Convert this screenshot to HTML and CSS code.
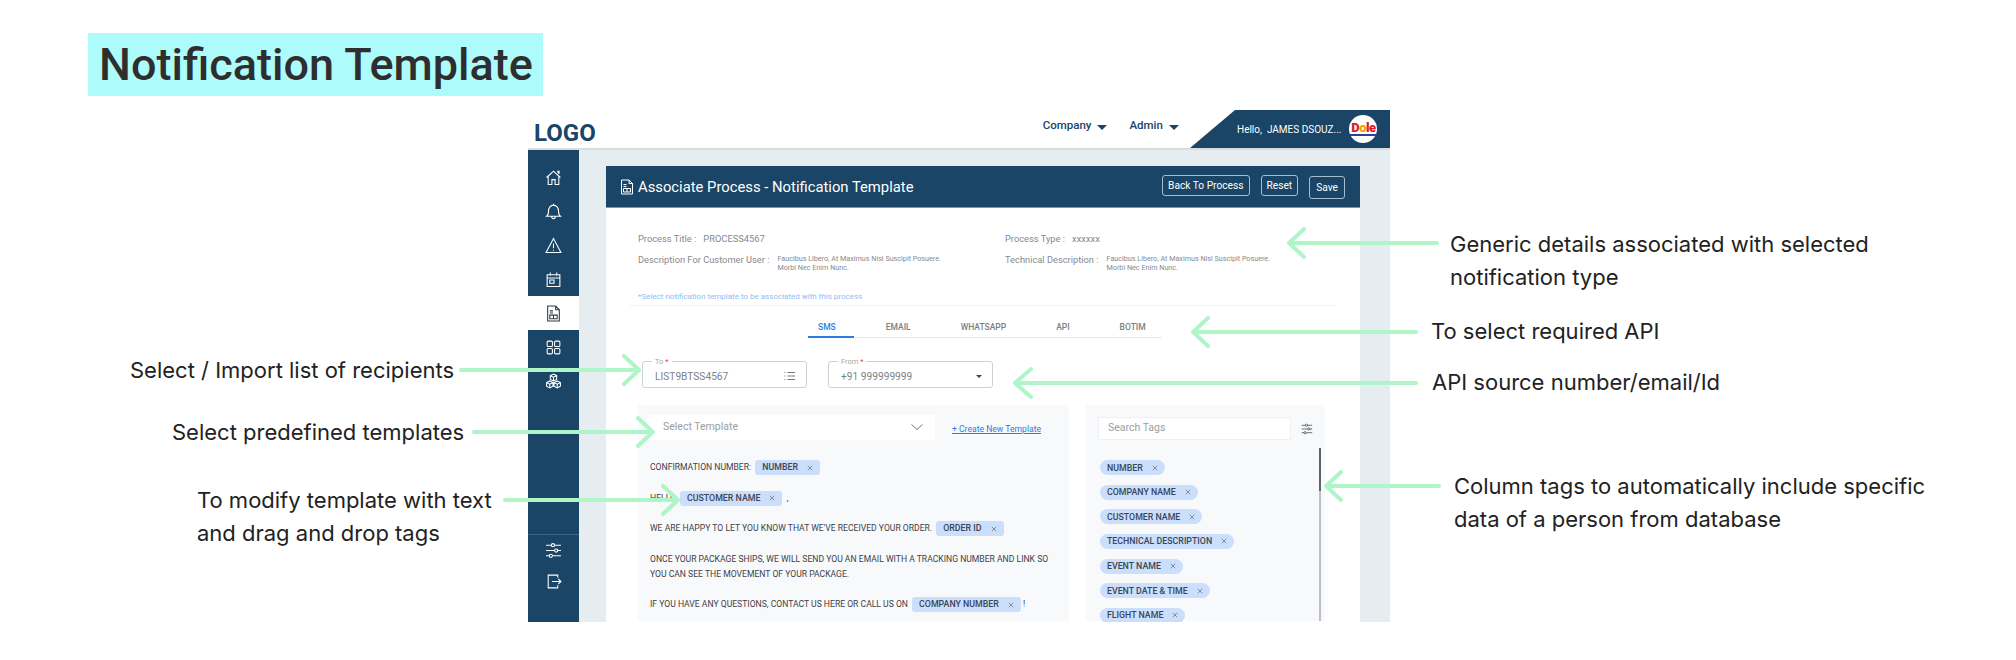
FILE: index.html
```html
<!DOCTYPE html>
<html lang="en">
<head>
    <meta charset="UTF-8">
    <meta name="viewport" content="width=device-width, initial-scale=1.0">
    <title>Notification Template</title>
    <link rel="stylesheet" href="styles.css">
</head>
<body>

    <svg class="sprite" width="0" height="0">
        <symbol id="i-x" viewBox="0 0 8 8"><path d="M1 1l6 6M7 1L1 7"/></symbol>
        <symbol id="i-home" viewBox="0 0 16 16"><path d="M1.500 8L8 2l6.500 6M3 7v7.500h3.500v-4.500h3v4.500H13V7"/><path d="M11.500 2.500h1.500v2" stroke-width="1.500"/></symbol>
        <symbol id="i-bell" viewBox="0 0 16 16"><path d="M1.500 12.500c1.300-.8 1.800-2.300 1.800-5C3.300 4.500 5.300 2 8 2s4.700 2.500 4.700 5.500c0 2.700.5 4.200 1.800 5zM8 .8V2M6.300 12.800c0 2.600 3.400 2.600 3.400 0"/></symbol>
        <symbol id="i-warn" viewBox="0 0 16 16"><path d="M8 1.500L1 14.500h14zM8 6v4.500M8 12v1"/></symbol>
        <symbol id="i-cal" viewBox="0 0 16 16"><path d="M2 3.500h12v11H2zM2 6.500h12M5 1.500v3M11 1.500v3M4.500 8.500h4v3h-4z"/></symbol>
        <symbol id="i-doc" viewBox="0 0 14 16"><path d="M1.500 1h7.500l3.500 3.500V15h-11zM9 1v3.500h3.500M3.500 9.500h7v3.500h-7zM7 9.500V13M3.500 5.500h3M3.500 7.500h3"/></symbol>
        <symbol id="i-grid" viewBox="0 0 16 16"><rect x="2" y="2" width="5" height="5" rx="1"/><rect x="9" y="2" width="5" height="5" rx="1"/><rect x="2" y="9" width="5" height="5" rx="1"/><rect x="9" y="9" width="5" height="5" rx="1"/></symbol>
        <symbol id="i-boxes" viewBox="0 0 16 16"><path d="M8 1l3 1.500v3.500l-3 1.500-3-1.500V2.500zM5 2.500L8 4l3-1.500M8 4v3.500M4.500 7.500l3 1.500v3.500l-3 1.500-3-1.500V9zM1.500 9l3 1.500 3-1.500M4.500 10.500V14M11.500 7.500l3 1.500v3.500l-3 1.500-3-1.500V9zM8.500 9l3 1.500 3-1.500M11.500 10.500V14"/></symbol>
        <symbol id="i-sliders" viewBox="0 0 16 16"><path d="M1 3h5M9 3h6M1 8h8M12 8h3M1 13h3M7 13h8"/><circle cx="7.500" cy="3" r="1.500"/><circle cx="10.500" cy="8" r="1.500"/><circle cx="5.500" cy="13" r="1.500"/></symbol>
        <symbol id="i-exit" viewBox="0 0 16 16"><path d="M12 4.500V2H3v12h9v-2.500M6.500 8H15M12.500 5.500L15 8l-2.500 2.500"/></symbol>
        <symbol id="i-list" viewBox="0 0 12 10"><path d="M3.500 1.500H11M3.500 5H11M3.500 8.500H11M.5 1.500h1M.5 5h1M.5 8.500h1"/></symbol>
    </svg>

    <h1 class="page-title">Notification Template</h1>

    <div class="mock">
        <header class="topbar">
            <div class="logo">LOGO</div>
            <div class="topnav">
                <span class="topnav-item">Company<i class="caret"></i></span>
                <span class="topnav-item">Admin<i class="caret"></i></span>
            </div>
            <div class="user">
                <span>Hello,&nbsp; JAMES DSOUZ...</span>
                <span class="avatar"><span class="dole">D<span class="sun">o</span>le</span></span>
            </div>
        </header>

        <div class="mock-body">
            <nav class="sidebar">
                <a class="side-item"><svg class="icon"><use href="#i-home"/></svg></a>
                <a class="side-item"><svg class="icon"><use href="#i-bell"/></svg></a>
                <a class="side-item"><svg class="icon"><use href="#i-warn"/></svg></a>
                <a class="side-item"><svg class="icon"><use href="#i-cal"/></svg></a>
                <a class="side-item active"><svg class="icon"><use href="#i-doc"/></svg></a>
                <a class="side-item"><svg class="icon"><use href="#i-grid"/></svg></a>
                <a class="side-item"><svg class="icon"><use href="#i-boxes"/></svg></a>
                <div class="side-bottom">
                    <a class="side-item"><svg class="icon"><use href="#i-sliders"/></svg></a>
                    <a class="side-item"><svg class="icon"><use href="#i-exit"/></svg></a>
                </div>
            </nav>

            <main class="content">
                <section class="card">
                    <div class="card-head">
                        <svg class="head-icon"><use href="#i-doc"/></svg>
                        <h2>Associate Process - Notification Template</h2>
                        <div class="head-actions">
                            <button>Back To Process</button>
                            <button>Reset</button>
                            <button class="save">Save</button>
                        </div>
                    </div>

                    <div class="details">
                        <div class="detail">Process Title :<span class="detail-val">PROCESS4567</span></div>
                        <div class="detail">Process Type :<span class="detail-val">xxxxxx</span></div>
                        <div class="detail">Description For Customer User :<span class="detail-small">Faucibus Libero, At Maximus Nisl Suscipit Posuere.<br>Morbi Nec Enim Nunc.</span></div>
                        <div class="detail">Technical Description :<span class="detail-small">Faucibus Libero, At Maximus Nisl Suscipit Posuere.<br>Morbi Nec Enim Nunc.</span></div>
                    </div>

                    <div class="note">*Select notification template to be associated with this process</div>

                    <div class="tabs">
                        <span class="tab active">SMS</span>
                        <span class="tab">EMAIL</span>
                        <span class="tab">WHATSAPP</span>
                        <span class="tab">API</span>
                        <span class="tab">BOTIM</span>
                    </div>

                    <div class="fields">
                        <div class="field">
                            <span class="field-label">To <b>*</b></span>
                            LIST9BTSS4567
                            <svg class="list-icon"><use href="#i-list"/></svg>
                        </div>
                        <div class="field">
                            <span class="field-label">From <b>*</b></span>
                            +91 999999999
                            <i class="caret small"></i>
                        </div>
                    </div>

                    <div class="panels">
                        <div class="template-panel">
                            <div class="template-top">
                                <div class="template-select">Select Template
                                    <svg class="chevron" viewBox="0 0 12 6"><path d="M.5.5L6 5.500 11.500.5"/></svg>
                                </div>
                                <a class="create-link">+ Create New Template</a>
                            </div>
                            <div class="editor">
                                <p>CONFIRMATION NUMBER: <span class="chip">NUMBER<svg class="x"><use href="#i-x"/></svg></span></p>
                                <p>HELLO <span class="chip">CUSTOMER NAME<svg class="x"><use href="#i-x"/></svg></span> &nbsp;,</p>
                                <p>WE ARE HAPPY TO LET YOU KNOW THAT WE'VE RECEIVED YOUR ORDER. <span class="chip">ORDER ID<svg class="x"><use href="#i-x"/></svg></span></p>
                                <p>ONCE YOUR PACKAGE SHIPS, WE WILL SEND YOU AN EMAIL WITH A TRACKING NUMBER AND LINK SO YOU CAN SEE THE MOVEMENT OF YOUR PACKAGE.</p>
                                <p>IF YOU HAVE ANY QUESTIONS, CONTACT US HERE OR CALL US ON <span class="chip">COMPANY NUMBER<svg class="x"><use href="#i-x"/></svg></span> !</p>
                            </div>
                        </div>

                        <div class="tags-panel">
                            <div class="tags-search">
                                <div class="search-box">Search Tags</div>
                                <svg class="filter-icon"><use href="#i-sliders"/></svg>
                            </div>
                            <div class="tags">
                                <span class="chip pill">NUMBER<svg class="x"><use href="#i-x"/></svg></span>
                                <span class="chip pill">COMPANY NAME<svg class="x"><use href="#i-x"/></svg></span>
                                <span class="chip pill">CUSTOMER NAME<svg class="x"><use href="#i-x"/></svg></span>
                                <span class="chip pill">TECHNICAL DESCRIPTION<svg class="x"><use href="#i-x"/></svg></span>
                                <span class="chip pill">EVENT NAME<svg class="x"><use href="#i-x"/></svg></span>
                                <span class="chip pill">EVENT DATE &amp; TIME<svg class="x"><use href="#i-x"/></svg></span>
                                <span class="chip pill">FLIGHT NAME<svg class="x"><use href="#i-x"/></svg></span>
                            </div>
                            <div class="scrollbar"><div class="scroll-thumb"></div></div>
                        </div>
                    </div>
                </section>
            </main>
        </div>
    </div>

    <!-- callouts sit on top of the mockup -->
    <svg class="arrows" viewBox="0 0 2016 660">
        <path d="M1437 243H1290M1304 229l-15 14 15 14"/>
        <path d="M1416 332H1194M1208 318l-15 14 15 14"/>
        <path d="M1416 383H1016M1031 369l-16 14 16 14"/>
        <path d="M1439 486H1327M1341 472l-15 14 15 14"/>
        <path d="M461 370H637M624 356l15 14-15 14"/>
        <path d="M474 432H650M638 418l15 14-15 14"/>
        <path d="M505 500H676M663 486l15 14-15 14"/>
    </svg>

    <p class="callout c-generic">Generic details associated with selected notification type</p>
    <p class="callout c-api">To select required API</p>
    <p class="callout c-source">API source number/email/Id</p>
    <p class="callout c-tags">Column tags to automatically include specific data of a person from database</p>
    <p class="callout c-import">Select / Import list of recipients</p>
    <p class="callout c-predefined">Select predefined templates</p>
    <p class="callout c-modify">To modify template with text and drag and drop tags</p>

</body>
</html>
```

FILE: styles.css
```css
* {
    box-sizing: border-box;
}

body {
    position: relative;
    width: 2016px;
    height: 660px;
    margin: 0;
    overflow: hidden;
    background-color: #fff;
    font-family: Roboto, sans-serif;
}

.sprite {
    position: absolute;
}

symbol {
    fill: none;
    stroke: currentColor;
}

.page-title {
    width: 455px;
    height: 63px;
    margin: 33px 0 0 88px;
    padding-left: 11px;
    background-color: #adfbfb;
    color: #2e2e2e;
    font-size: 45px;
    font-weight: 500;
    line-height: 63px;
    white-space: nowrap;
}

/* mockup */
.mock {
    width: 862px;
    height: 512px;
    margin: 14px 0 0 528px;
    overflow: hidden;
}

.topbar {
    display: flex;
    align-items: center;
    height: 40px;
    background-color: #fff;
    box-shadow: 0 -1px 0 #f4f4f4;
}

.logo {
    padding: 5px 0 0 6px;
    color: #1a4566;
    font-size: 24px;
    font-weight: 700;
}

.topnav {
    display: flex;
    gap: 22px;
    margin: 0 0 10px 447px;
    color: #1a4566;
    font-size: 11.500px;
    font-weight: 500;
}

.topnav-item {
    display: flex;
    align-items: center;
}

.caret {
    display: inline-block;
    width: 0;
    height: 0;
    margin: 5px 0 0 6px;
    border-top: 5px solid #1a4566;
    border-left: 5.500px solid transparent;
    border-right: 5.500px solid transparent;
}

.user {
    display: flex;
    align-items: center;
    width: 200px;
    height: 38px;
    margin: 0 0 2px auto;
    padding-left: 47px;
    gap: 8px;
    background-color: #1a4566;
    clip-path: polygon(45px 0, 100% 0, 100% 100%, 0 100%);
    color: #fff;
    font-size: 10px;
    white-space: nowrap;
}

.avatar {
    display: flex;
    align-items: center;
    justify-content: center;
    flex: none;
    width: 28px;
    height: 28px;
    border-radius: 50%;
    background-color: #fff;
}

.dole {
    padding: 0 1px 1px;
    border-bottom: 2px solid #2b3f9e;
    color: #e11b22;
    font-size: 13px;
    font-weight: 900;
    letter-spacing: -0.5px;
    line-height: 11px;
}

.sun {
    color: #f5a300;
}

.mock-body {
    display: flex;
    height: 474px;
    margin-top: -2px;
    border-top: 2px solid #d9dde0;
}

.sidebar {
    display: flex;
    flex-direction: column;
    flex: none;
    width: 51px;
    padding-top: 10px;
    background-color: #1a4566;
}

.side-item {
    display: flex;
    align-items: center;
    justify-content: center;
    height: 34px;
    color: #fff;
}

.side-item.active {
    background-color: #fff;
    color: #333a40;
}

.icon {
    width: 17px;
    height: 17px;
}

.side-bottom {
    margin-top: auto;
    padding-bottom: 25px;
    border-top: 1px solid #3f6583;
}

.side-bottom .side-item {
    height: 31px;
}

.content {
    flex: 1;
    padding: 16px 30px 0 27px;
    background-color: #e6edf1;
}

.card {
    height: 100%;
    background-color: #fff;
    overflow: hidden;
}

.card-head {
    display: flex;
    align-items: center;
    height: 42px;
    padding: 0 15px 0 14px;
    background-color: #1a4566;
    border-bottom: 1px solid #7d96aa;
    color: #fff;
}

.head-icon {
    flex: none;
    width: 14px;
    height: 16px;
    margin-right: 4px;
}

.card-head h2 {
    margin: 0;
    font-size: 14.800px;
    font-weight: 400;
}

.head-actions {
    display: flex;
    gap: 11px;
    margin-left: auto;
}

.head-actions button {
    height: 21px;
    padding: 0 5px;
    border: 1px solid #a9bccb;
    border-radius: 3px;
    background: none;
    color: #fff;
    font-family: Roboto, sans-serif;
    font-size: 10.200px;
}

.head-actions .save {
    height: 23px;
    margin-top: 1px;
    padding: 0 6px;
}

.details {
    display: grid;
    grid-template-columns: 367px 1fr;
    row-gap: 7px;
    padding: 24px 0 0 32px;
    color: #858a8f;
    font-size: 9.300px;
    line-height: 14px;
}

.detail {
    display: flex;
}

.detail-val {
    margin-left: 7px;
}

.detail-small {
    margin-left: 8px;
    padding-top: 2px;
    font-size: 7.200px;
    line-height: 8.500px;
}

.note {
    height: 16px;
    margin: 18px 24px 0;
    padding-left: 8px;
    border-bottom: 1px solid #eef3fa;
    color: #8fbcf5;
    font-size: 8px;
    line-height: 13px;
}

.tabs {
    display: flex;
    gap: 22px;
    width: 354px;
    height: 22px;
    margin: 10px 0 0 202px;
    border-bottom: 1px solid #e4e6e9;
    color: #7a7f85;
    font-size: 8.500px;
    font-weight: 500;
    line-height: 22px;
}

.tab {
    height: 22px;
    padding: 0 18px 0 10px;
}

.tab.active {
    color: #2e7be6;
    border-bottom: 2px solid #2e7be6;
}

.fields {
    display: flex;
    gap: 21px;
    margin: 23px 0 0 36px;
}

.field {
    position: relative;
    display: flex;
    align-items: center;
    justify-content: space-between;
    width: 165px;
    height: 27px;
    padding: 3px 10px 0 12px;
    border: 1px solid #ccd1d7;
    border-radius: 3px;
    color: #7d8287;
    font-size: 10.200px;
}

.field-label {
    position: absolute;
    top: -5px;
    left: 9px;
    padding: 0 3px;
    background-color: #fff;
    color: #a3a7ab;
    font-size: 7.500px;
    line-height: 9px;
}

.field-label b {
    color: #e23b3b;
    font-weight: 400;
}

.list-icon {
    width: 12px;
    height: 10px;
    color: #70757a;
}

.caret.small {
    margin: 0;
    border-top-width: 3px;
    border-top-color: #444;
    border-left-width: 3.500px;
    border-right-width: 3.500px;
}

.panels {
    display: flex;
    gap: 17px;
    height: 216px;
    margin: 17px 0 0 32px;
}

.template-panel {
    width: 431px;
    padding: 10px 0 0 9px;
    background-color: #f8f9fb;
}

.template-top {
    display: flex;
    align-items: center;
    gap: 17px;
}

.template-select {
    display: flex;
    align-items: center;
    justify-content: space-between;
    width: 288px;
    height: 25px;
    padding: 0 12px 2px 16px;
    background-color: #fff;
    color: #9a9ea3;
    font-size: 10.500px;
}

.chevron {
    width: 12px;
    height: 6px;
    fill: none;
    stroke: #70757a;
}

.create-link {
    margin-top: 3px;
    color: #2e7be6;
    font-size: 8.600px;
    text-decoration: underline;
}

.editor {
    padding: 20px 10px 0 3px;
    color: #3d4147;
    font-size: 8.600px;
    line-height: 15px;
}

.editor p {
    margin: 0 0 15.500px;
}

.chip {
    display: inline-flex;
    align-items: center;
    height: 15px;
    margin-left: 2px;
    padding: 0 7px;
    border-radius: 3px;
    background-color: #cbdefb;
    color: #3a4657;
    font-size: 8.800px;
    font-weight: 500;
    vertical-align: top;
}

.x {
    width: 6px;
    height: 6px;
    margin-left: 9px;
    color: #6a7280;
}

.tags-panel {
    position: relative;
    width: 239px;
    padding: 12px 12px 0;
    background-color: #f8f9fb;
}

.tags-search {
    display: flex;
    align-items: center;
    gap: 10px;
}

.search-box {
    width: 194px;
    height: 23px;
    padding: 0 9px;
    border: 1px solid #eef0f3;
    background-color: #fff;
    color: #9a9ea3;
    font-size: 10.500px;
    line-height: 20px;
}

.filter-icon {
    width: 12px;
    height: 12px;
    color: #3d4147;
}

.tags {
    display: flex;
    flex-direction: column;
    align-items: flex-start;
    gap: 9.670px;
    margin: 20px 0 0 2px;
}

.chip.pill {
    margin: 0;
    border-radius: 8px;
}

.scrollbar {
    position: absolute;
    top: 43px;
    right: 4px;
    bottom: 0;
    width: 2px;
    background-color: #bdbfc2;
}

.scroll-thumb {
    height: 43px;
    background-color: #5f6368;
}

/* callouts */
.arrows {
    position: absolute;
    top: 0;
    left: 0;
    width: 2016px;
    height: 660px;
    fill: none;
    stroke: #aef5c8;
    stroke-width: 4;
    stroke-linecap: round;
    stroke-linejoin: round;
}

.callout {
    position: absolute;
    margin: 0;
    color: #222;
    font-family: Inter, sans-serif;
    font-size: 22px;
    line-height: 33px;
}

.c-generic { left: 1450px; top: 228px; width: 430px; }
.c-api { left: 1431px; top: 315px; }
.c-source { left: 1432px; top: 366px; }
.c-tags { left: 1454px; top: 470px; width: 480px; }
.c-import { left: 130px; top: 354px; }
.c-predefined { left: 172px; top: 416px; }
.c-modify { left: 197px; top: 484px; width: 310px; }
```
